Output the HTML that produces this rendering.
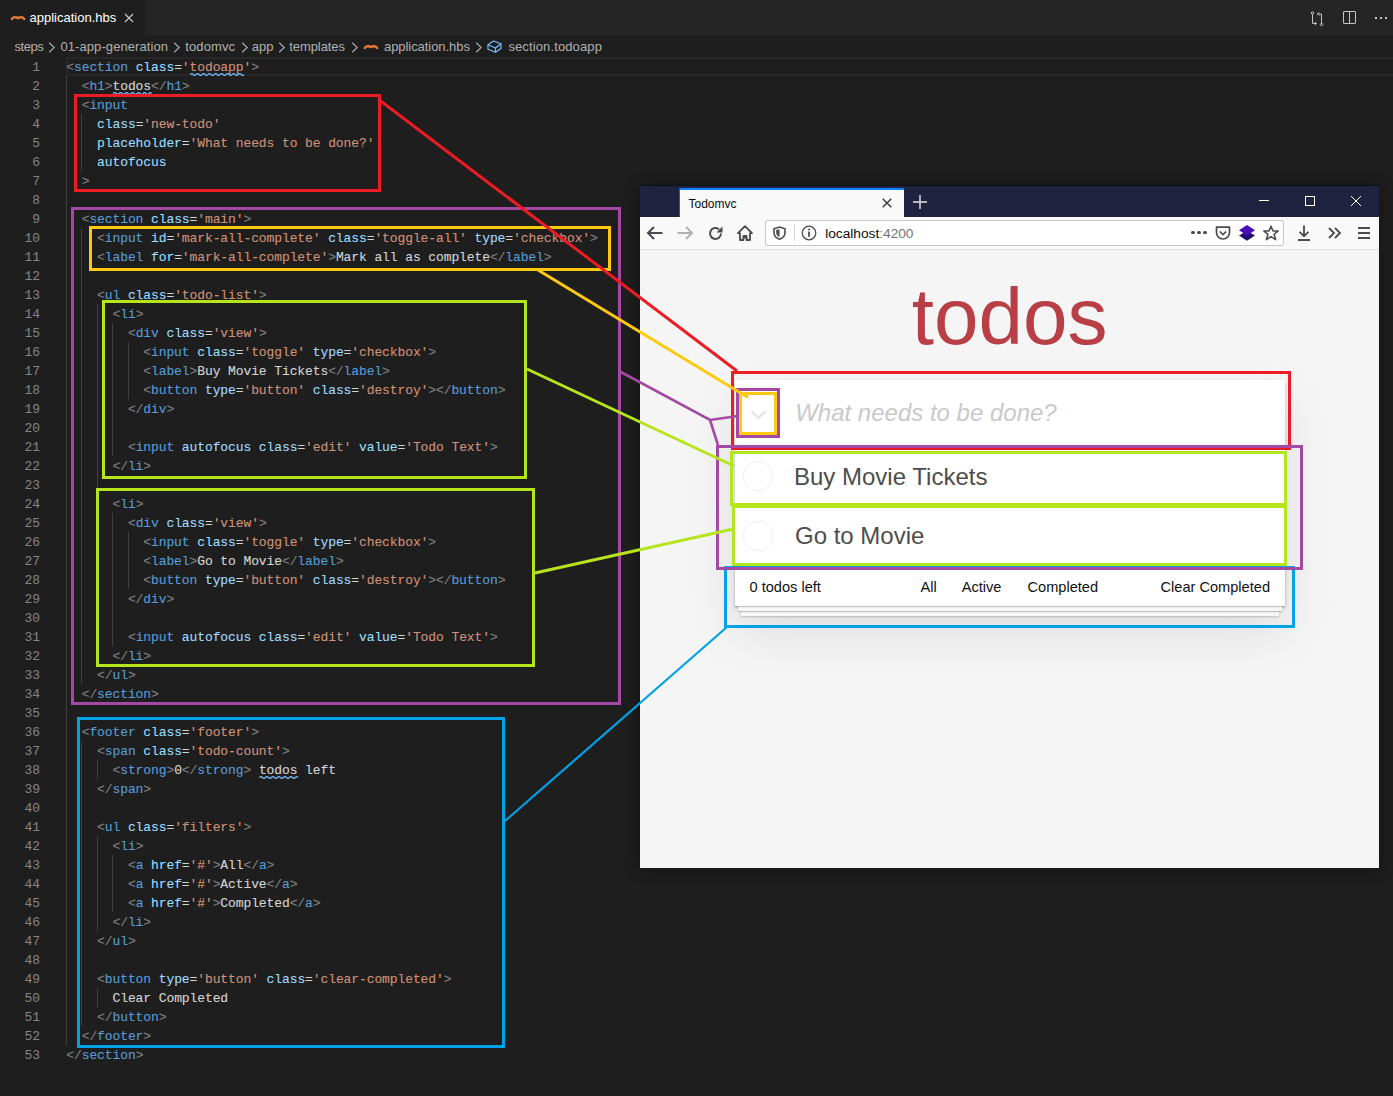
<!DOCTYPE html><html><head><meta charset="utf-8"><style>
html,body{margin:0;padding:0}
body{width:1393px;height:1096px;background:#1e1e1e;position:relative;overflow:hidden;font-family:"Liberation Sans",sans-serif}
.abs{position:absolute}
.t{position:absolute;line-height:0;white-space:pre}
.cl{position:absolute;left:66.3px;height:19px;line-height:19px;white-space:pre;font-family:"Liberation Mono",monospace;font-size:13px;letter-spacing:-0.100px;color:#d4d4d4;-webkit-text-stroke:0.12px currentColor}
.ln{position:absolute;left:0;width:40px;text-align:right;height:19px;line-height:19px;font-family:"Liberation Mono",monospace;font-size:13px;letter-spacing:-0.100px;color:#858585}
.ig{position:absolute;width:1px;background:#404040}
.bx{position:absolute}
</style></head><body>
<div class="abs" style="left:0;top:0;width:1393px;height:35px;background:#252526"></div>
<div class="abs" style="left:0;top:0;width:145px;height:35px;background:#1e1e1e"></div>
<svg class="abs" style="left:10px;top:13px;overflow:visible" width="16" height="10" viewBox="0 0 16 10" ><path d="M1.8 6 Q3.2 4.1 5.1 4.3 Q6.9 4.5 8 5.1 Q9.1 4.5 10.9 4.3 Q12.8 4.1 14.2 6" fill="none" stroke="#e37933" stroke-width="2.4" stroke-linecap="round" stroke-linejoin="round"/></svg>
<div class="t" style="left:29.5px;top:17.90px;font-size:13px;color:#ffffff;font-family:'Liberation Sans',sans-serif;">application.hbs</div>
<svg class="abs" style="left:124px;top:13px;overflow:visible" width="10" height="10" viewBox="0 0 10 10" ><path d="M1 1L9 9M9 1L1 9" stroke="#cccccc" stroke-width="1.1"/></svg>
<svg class="abs" style="left:1309px;top:10px;overflow:visible" width="18" height="18" viewBox="0 0 18 18" ><g fill="none" stroke="#c5c5c5" stroke-width="1"><circle cx="3.5" cy="3" r="1.2"/><path d="M3.5 4.2V13.5H7.5M5.8 11.8L7.5 13.5L5.8 15.2"/><circle cx="12.5" cy="14.5" r="1.2"/><path d="M12.5 13.3V4H8.5M10.2 2.3L8.5 4L10.2 5.7"/></g></svg>
<svg class="abs" style="left:1341px;top:10px;overflow:visible" width="16" height="16" viewBox="0 0 16 16" ><g fill="none" stroke="#c5c5c5" stroke-width="1"><rect x="2.5" y="1.5" width="12" height="12" rx="0.5"/><path d="M8.5 1.5V13.5"/></g></svg>
<div class="abs" style="left:1375px;top:17px;width:2px;height:2px;background:#c5c5c5;box-shadow:5px 0 0 #c5c5c5,10px 0 0 #c5c5c5"></div>
<div class="t" style="left:14.399999999999999px;top:46.80px;font-size:13px;color:#b0b0b0;font-family:'Liberation Sans',sans-serif;letter-spacing:-0.4px">steps</div>
<svg class="abs" style="left:48.2px;top:41.5px;overflow:visible" width="8" height="11" viewBox="0 0 8 11" ><path d="M1.2 0.7L6.2 5.5L1.2 10.3" fill="none" stroke="#a9a9a9" stroke-width="1.2"/></svg>
<div class="t" style="left:60.400000000000006px;top:46.80px;font-size:13px;color:#b0b0b0;font-family:'Liberation Sans',sans-serif;letter-spacing:0.09px">01-app-generation</div>
<svg class="abs" style="left:172.9px;top:41.5px;overflow:visible" width="8" height="11" viewBox="0 0 8 11" ><path d="M1.2 0.7L6.2 5.5L1.2 10.3" fill="none" stroke="#a9a9a9" stroke-width="1.2"/></svg>
<div class="t" style="left:185.2px;top:46.80px;font-size:13px;color:#b0b0b0;font-family:'Liberation Sans',sans-serif;letter-spacing:0.13px">todomvc</div>
<svg class="abs" style="left:240.7px;top:41.5px;overflow:visible" width="8" height="11" viewBox="0 0 8 11" ><path d="M1.2 0.7L6.2 5.5L1.2 10.3" fill="none" stroke="#a9a9a9" stroke-width="1.2"/></svg>
<div class="t" style="left:251.7px;top:46.80px;font-size:13px;color:#b0b0b0;font-family:'Liberation Sans',sans-serif;letter-spacing:0px">app</div>
<svg class="abs" style="left:277.9px;top:41.5px;overflow:visible" width="8" height="11" viewBox="0 0 8 11" ><path d="M1.2 0.7L6.2 5.5L1.2 10.3" fill="none" stroke="#a9a9a9" stroke-width="1.2"/></svg>
<div class="t" style="left:289.2px;top:46.80px;font-size:13px;color:#b0b0b0;font-family:'Liberation Sans',sans-serif;letter-spacing:-0.07px">templates</div>
<svg class="abs" style="left:350.5px;top:41.5px;overflow:visible" width="8" height="11" viewBox="0 0 8 11" ><path d="M1.2 0.7L6.2 5.5L1.2 10.3" fill="none" stroke="#a9a9a9" stroke-width="1.2"/></svg>
<svg class="abs" style="left:363.40000000000003px;top:41.5px;overflow:visible" width="16" height="10" viewBox="0 0 16 10" ><path d="M1.8 6 Q3.2 4.1 5.1 4.3 Q6.9 4.5 8 5.1 Q9.1 4.5 10.9 4.3 Q12.8 4.1 14.2 6" fill="none" stroke="#e37933" stroke-width="2.4" stroke-linecap="round" stroke-linejoin="round"/></svg>
<div class="t" style="left:384.0px;top:46.80px;font-size:13px;color:#b0b0b0;font-family:'Liberation Sans',sans-serif;letter-spacing:-0.06px">application.hbs</div>
<svg class="abs" style="left:474.5px;top:41.5px;overflow:visible" width="8" height="11" viewBox="0 0 8 11" ><path d="M1.2 0.7L6.2 5.5L1.2 10.3" fill="none" stroke="#a9a9a9" stroke-width="1.2"/></svg>
<svg class="abs" style="left:486.6px;top:39.5px;overflow:visible" width="15" height="13" viewBox="0 0 15 13" ><g fill="none" stroke="#75beff" stroke-width="1.2" stroke-linejoin="round"><path d="M1 4.8L6.5 1L14 3.8V8.6L8.5 12.3L1 9.3Z"/><path d="M1 4.8L8.5 8L14 3.8M8.5 8V12.3"/></g></svg>
<div class="t" style="left:508.4px;top:46.80px;font-size:13px;color:#b0b0b0;font-family:'Liberation Sans',sans-serif;letter-spacing:0.12px">section.todoapp</div>
<div class="abs" style="left:66px;top:57px;width:1325px;height:15px;border:2px solid #282828;border-right:none"></div>
<div class="ig" style="left:66px;top:76px;height:969px"></div>
<div class="ig" style="left:81px;top:114px;height:57px"></div>
<div class="ig" style="left:81px;top:228px;height:456px"></div>
<div class="ig" style="left:81px;top:741px;height:285px"></div>
<div class="ig" style="left:97px;top:304px;height:361px"></div>
<div class="ig" style="left:97px;top:760px;height:19px"></div>
<div class="ig" style="left:97px;top:836px;height:95px"></div>
<div class="ig" style="left:97px;top:988px;height:19px"></div>
<div class="ig" style="left:112px;top:323px;height:133px"></div>
<div class="ig" style="left:112px;top:513px;height:133px"></div>
<div class="ig" style="left:112px;top:855px;height:57px"></div>
<div class="ig" style="left:128px;top:342px;height:57px"></div>
<div class="ig" style="left:128px;top:532px;height:57px"></div>
<div class="cl" style="top:58px"><span style="color:#808080">&lt;</span><span style="color:#569cd6">section</span> <span style="color:#9cdcfe">class</span><span style="color:#d4d4d4">=</span><span style="color:#ce9178">&#x27;todoapp&#x27;</span><span style="color:#808080">&gt;</span></div>
<div class="ln" style="top:58px">1</div>
<div class="cl" style="top:77px">  <span style="color:#808080">&lt;</span><span style="color:#569cd6">h1</span><span style="color:#808080">&gt;</span><span style="color:#d4d4d4">todos</span><span style="color:#808080">&lt;/</span><span style="color:#569cd6">h1</span><span style="color:#808080">&gt;</span></div>
<div class="ln" style="top:77px">2</div>
<div class="cl" style="top:96px">  <span style="color:#808080">&lt;</span><span style="color:#569cd6">input</span></div>
<div class="ln" style="top:96px">3</div>
<div class="cl" style="top:115px">    <span style="color:#9cdcfe">class</span><span style="color:#d4d4d4">=</span><span style="color:#ce9178">&#x27;new-todo&#x27;</span></div>
<div class="ln" style="top:115px">4</div>
<div class="cl" style="top:134px">    <span style="color:#9cdcfe">placeholder</span><span style="color:#d4d4d4">=</span><span style="color:#ce9178">&#x27;What needs to be done?&#x27;</span></div>
<div class="ln" style="top:134px">5</div>
<div class="cl" style="top:153px">    <span style="color:#9cdcfe">autofocus</span></div>
<div class="ln" style="top:153px">6</div>
<div class="cl" style="top:172px">  <span style="color:#808080">&gt;</span></div>
<div class="ln" style="top:172px">7</div>
<div class="cl" style="top:191px"></div>
<div class="ln" style="top:191px">8</div>
<div class="cl" style="top:210px">  <span style="color:#808080">&lt;</span><span style="color:#569cd6">section</span> <span style="color:#9cdcfe">class</span><span style="color:#d4d4d4">=</span><span style="color:#ce9178">&#x27;main&#x27;</span><span style="color:#808080">&gt;</span></div>
<div class="ln" style="top:210px">9</div>
<div class="cl" style="top:229px">    <span style="color:#808080">&lt;</span><span style="color:#569cd6">input</span> <span style="color:#9cdcfe">id</span><span style="color:#d4d4d4">=</span><span style="color:#ce9178">&#x27;mark-all-complete&#x27;</span> <span style="color:#9cdcfe">class</span><span style="color:#d4d4d4">=</span><span style="color:#ce9178">&#x27;toggle-all&#x27;</span> <span style="color:#9cdcfe">type</span><span style="color:#d4d4d4">=</span><span style="color:#ce9178">&#x27;checkbox&#x27;</span><span style="color:#808080">&gt;</span></div>
<div class="ln" style="top:229px">10</div>
<div class="cl" style="top:248px">    <span style="color:#808080">&lt;</span><span style="color:#569cd6">label</span> <span style="color:#9cdcfe">for</span><span style="color:#d4d4d4">=</span><span style="color:#ce9178">&#x27;mark-all-complete&#x27;</span><span style="color:#808080">&gt;</span><span style="color:#d4d4d4">Mark all as complete</span><span style="color:#808080">&lt;/</span><span style="color:#569cd6">label</span><span style="color:#808080">&gt;</span></div>
<div class="ln" style="top:248px">11</div>
<div class="cl" style="top:267px"></div>
<div class="ln" style="top:267px">12</div>
<div class="cl" style="top:286px">    <span style="color:#808080">&lt;</span><span style="color:#569cd6">ul</span> <span style="color:#9cdcfe">class</span><span style="color:#d4d4d4">=</span><span style="color:#ce9178">&#x27;todo-list&#x27;</span><span style="color:#808080">&gt;</span></div>
<div class="ln" style="top:286px">13</div>
<div class="cl" style="top:305px">      <span style="color:#808080">&lt;</span><span style="color:#569cd6">li</span><span style="color:#808080">&gt;</span></div>
<div class="ln" style="top:305px">14</div>
<div class="cl" style="top:324px">        <span style="color:#808080">&lt;</span><span style="color:#569cd6">div</span> <span style="color:#9cdcfe">class</span><span style="color:#d4d4d4">=</span><span style="color:#ce9178">&#x27;view&#x27;</span><span style="color:#808080">&gt;</span></div>
<div class="ln" style="top:324px">15</div>
<div class="cl" style="top:343px">          <span style="color:#808080">&lt;</span><span style="color:#569cd6">input</span> <span style="color:#9cdcfe">class</span><span style="color:#d4d4d4">=</span><span style="color:#ce9178">&#x27;toggle&#x27;</span> <span style="color:#9cdcfe">type</span><span style="color:#d4d4d4">=</span><span style="color:#ce9178">&#x27;checkbox&#x27;</span><span style="color:#808080">&gt;</span></div>
<div class="ln" style="top:343px">16</div>
<div class="cl" style="top:362px">          <span style="color:#808080">&lt;</span><span style="color:#569cd6">label</span><span style="color:#808080">&gt;</span><span style="color:#d4d4d4">Buy Movie Tickets</span><span style="color:#808080">&lt;/</span><span style="color:#569cd6">label</span><span style="color:#808080">&gt;</span></div>
<div class="ln" style="top:362px">17</div>
<div class="cl" style="top:381px">          <span style="color:#808080">&lt;</span><span style="color:#569cd6">button</span> <span style="color:#9cdcfe">type</span><span style="color:#d4d4d4">=</span><span style="color:#ce9178">&#x27;button&#x27;</span> <span style="color:#9cdcfe">class</span><span style="color:#d4d4d4">=</span><span style="color:#ce9178">&#x27;destroy&#x27;</span><span style="color:#808080">&gt;</span><span style="color:#808080">&lt;/</span><span style="color:#569cd6">button</span><span style="color:#808080">&gt;</span></div>
<div class="ln" style="top:381px">18</div>
<div class="cl" style="top:400px">        <span style="color:#808080">&lt;/</span><span style="color:#569cd6">div</span><span style="color:#808080">&gt;</span></div>
<div class="ln" style="top:400px">19</div>
<div class="cl" style="top:419px"></div>
<div class="ln" style="top:419px">20</div>
<div class="cl" style="top:438px">        <span style="color:#808080">&lt;</span><span style="color:#569cd6">input</span> <span style="color:#9cdcfe">autofocus</span> <span style="color:#9cdcfe">class</span><span style="color:#d4d4d4">=</span><span style="color:#ce9178">&#x27;edit&#x27;</span> <span style="color:#9cdcfe">value</span><span style="color:#d4d4d4">=</span><span style="color:#ce9178">&#x27;Todo Text&#x27;</span><span style="color:#808080">&gt;</span></div>
<div class="ln" style="top:438px">21</div>
<div class="cl" style="top:457px">      <span style="color:#808080">&lt;/</span><span style="color:#569cd6">li</span><span style="color:#808080">&gt;</span></div>
<div class="ln" style="top:457px">22</div>
<div class="cl" style="top:476px"></div>
<div class="ln" style="top:476px">23</div>
<div class="cl" style="top:495px">      <span style="color:#808080">&lt;</span><span style="color:#569cd6">li</span><span style="color:#808080">&gt;</span></div>
<div class="ln" style="top:495px">24</div>
<div class="cl" style="top:514px">        <span style="color:#808080">&lt;</span><span style="color:#569cd6">div</span> <span style="color:#9cdcfe">class</span><span style="color:#d4d4d4">=</span><span style="color:#ce9178">&#x27;view&#x27;</span><span style="color:#808080">&gt;</span></div>
<div class="ln" style="top:514px">25</div>
<div class="cl" style="top:533px">          <span style="color:#808080">&lt;</span><span style="color:#569cd6">input</span> <span style="color:#9cdcfe">class</span><span style="color:#d4d4d4">=</span><span style="color:#ce9178">&#x27;toggle&#x27;</span> <span style="color:#9cdcfe">type</span><span style="color:#d4d4d4">=</span><span style="color:#ce9178">&#x27;checkbox&#x27;</span><span style="color:#808080">&gt;</span></div>
<div class="ln" style="top:533px">26</div>
<div class="cl" style="top:552px">          <span style="color:#808080">&lt;</span><span style="color:#569cd6">label</span><span style="color:#808080">&gt;</span><span style="color:#d4d4d4">Go to Movie</span><span style="color:#808080">&lt;/</span><span style="color:#569cd6">label</span><span style="color:#808080">&gt;</span></div>
<div class="ln" style="top:552px">27</div>
<div class="cl" style="top:571px">          <span style="color:#808080">&lt;</span><span style="color:#569cd6">button</span> <span style="color:#9cdcfe">type</span><span style="color:#d4d4d4">=</span><span style="color:#ce9178">&#x27;button&#x27;</span> <span style="color:#9cdcfe">class</span><span style="color:#d4d4d4">=</span><span style="color:#ce9178">&#x27;destroy&#x27;</span><span style="color:#808080">&gt;</span><span style="color:#808080">&lt;/</span><span style="color:#569cd6">button</span><span style="color:#808080">&gt;</span></div>
<div class="ln" style="top:571px">28</div>
<div class="cl" style="top:590px">        <span style="color:#808080">&lt;/</span><span style="color:#569cd6">div</span><span style="color:#808080">&gt;</span></div>
<div class="ln" style="top:590px">29</div>
<div class="cl" style="top:609px"></div>
<div class="ln" style="top:609px">30</div>
<div class="cl" style="top:628px">        <span style="color:#808080">&lt;</span><span style="color:#569cd6">input</span> <span style="color:#9cdcfe">autofocus</span> <span style="color:#9cdcfe">class</span><span style="color:#d4d4d4">=</span><span style="color:#ce9178">&#x27;edit&#x27;</span> <span style="color:#9cdcfe">value</span><span style="color:#d4d4d4">=</span><span style="color:#ce9178">&#x27;Todo Text&#x27;</span><span style="color:#808080">&gt;</span></div>
<div class="ln" style="top:628px">31</div>
<div class="cl" style="top:647px">      <span style="color:#808080">&lt;/</span><span style="color:#569cd6">li</span><span style="color:#808080">&gt;</span></div>
<div class="ln" style="top:647px">32</div>
<div class="cl" style="top:666px">    <span style="color:#808080">&lt;/</span><span style="color:#569cd6">ul</span><span style="color:#808080">&gt;</span></div>
<div class="ln" style="top:666px">33</div>
<div class="cl" style="top:685px">  <span style="color:#808080">&lt;/</span><span style="color:#569cd6">section</span><span style="color:#808080">&gt;</span></div>
<div class="ln" style="top:685px">34</div>
<div class="cl" style="top:704px"></div>
<div class="ln" style="top:704px">35</div>
<div class="cl" style="top:723px">  <span style="color:#808080">&lt;</span><span style="color:#569cd6">footer</span> <span style="color:#9cdcfe">class</span><span style="color:#d4d4d4">=</span><span style="color:#ce9178">&#x27;footer&#x27;</span><span style="color:#808080">&gt;</span></div>
<div class="ln" style="top:723px">36</div>
<div class="cl" style="top:742px">    <span style="color:#808080">&lt;</span><span style="color:#569cd6">span</span> <span style="color:#9cdcfe">class</span><span style="color:#d4d4d4">=</span><span style="color:#ce9178">&#x27;todo-count&#x27;</span><span style="color:#808080">&gt;</span></div>
<div class="ln" style="top:742px">37</div>
<div class="cl" style="top:761px">      <span style="color:#808080">&lt;</span><span style="color:#569cd6">strong</span><span style="color:#808080">&gt;</span><span style="color:#d4d4d4">0</span><span style="color:#808080">&lt;/</span><span style="color:#569cd6">strong</span><span style="color:#808080">&gt;</span> <span style="color:#d4d4d4">todos left</span></div>
<div class="ln" style="top:761px">38</div>
<div class="cl" style="top:780px">    <span style="color:#808080">&lt;/</span><span style="color:#569cd6">span</span><span style="color:#808080">&gt;</span></div>
<div class="ln" style="top:780px">39</div>
<div class="cl" style="top:799px"></div>
<div class="ln" style="top:799px">40</div>
<div class="cl" style="top:818px">    <span style="color:#808080">&lt;</span><span style="color:#569cd6">ul</span> <span style="color:#9cdcfe">class</span><span style="color:#d4d4d4">=</span><span style="color:#ce9178">&#x27;filters&#x27;</span><span style="color:#808080">&gt;</span></div>
<div class="ln" style="top:818px">41</div>
<div class="cl" style="top:837px">      <span style="color:#808080">&lt;</span><span style="color:#569cd6">li</span><span style="color:#808080">&gt;</span></div>
<div class="ln" style="top:837px">42</div>
<div class="cl" style="top:856px">        <span style="color:#808080">&lt;</span><span style="color:#569cd6">a</span> <span style="color:#9cdcfe">href</span><span style="color:#d4d4d4">=</span><span style="color:#ce9178">&#x27;#&#x27;</span><span style="color:#808080">&gt;</span><span style="color:#d4d4d4">All</span><span style="color:#808080">&lt;/</span><span style="color:#569cd6">a</span><span style="color:#808080">&gt;</span></div>
<div class="ln" style="top:856px">43</div>
<div class="cl" style="top:875px">        <span style="color:#808080">&lt;</span><span style="color:#569cd6">a</span> <span style="color:#9cdcfe">href</span><span style="color:#d4d4d4">=</span><span style="color:#ce9178">&#x27;#&#x27;</span><span style="color:#808080">&gt;</span><span style="color:#d4d4d4">Active</span><span style="color:#808080">&lt;/</span><span style="color:#569cd6">a</span><span style="color:#808080">&gt;</span></div>
<div class="ln" style="top:875px">44</div>
<div class="cl" style="top:894px">        <span style="color:#808080">&lt;</span><span style="color:#569cd6">a</span> <span style="color:#9cdcfe">href</span><span style="color:#d4d4d4">=</span><span style="color:#ce9178">&#x27;#&#x27;</span><span style="color:#808080">&gt;</span><span style="color:#d4d4d4">Completed</span><span style="color:#808080">&lt;/</span><span style="color:#569cd6">a</span><span style="color:#808080">&gt;</span></div>
<div class="ln" style="top:894px">45</div>
<div class="cl" style="top:913px">      <span style="color:#808080">&lt;/</span><span style="color:#569cd6">li</span><span style="color:#808080">&gt;</span></div>
<div class="ln" style="top:913px">46</div>
<div class="cl" style="top:932px">    <span style="color:#808080">&lt;/</span><span style="color:#569cd6">ul</span><span style="color:#808080">&gt;</span></div>
<div class="ln" style="top:932px">47</div>
<div class="cl" style="top:951px"></div>
<div class="ln" style="top:951px">48</div>
<div class="cl" style="top:970px">    <span style="color:#808080">&lt;</span><span style="color:#569cd6">button</span> <span style="color:#9cdcfe">type</span><span style="color:#d4d4d4">=</span><span style="color:#ce9178">&#x27;button&#x27;</span> <span style="color:#9cdcfe">class</span><span style="color:#d4d4d4">=</span><span style="color:#ce9178">&#x27;clear-completed&#x27;</span><span style="color:#808080">&gt;</span></div>
<div class="ln" style="top:970px">49</div>
<div class="cl" style="top:989px">      <span style="color:#d4d4d4">Clear Completed</span></div>
<div class="ln" style="top:989px">50</div>
<div class="cl" style="top:1008px">    <span style="color:#808080">&lt;/</span><span style="color:#569cd6">button</span><span style="color:#808080">&gt;</span></div>
<div class="ln" style="top:1008px">51</div>
<div class="cl" style="top:1027px">  <span style="color:#808080">&lt;/</span><span style="color:#569cd6">footer</span><span style="color:#808080">&gt;</span></div>
<div class="ln" style="top:1027px">52</div>
<div class="cl" style="top:1046px"><span style="color:#808080">&lt;/</span><span style="color:#569cd6">section</span><span style="color:#808080">&gt;</span></div>
<div class="ln" style="top:1046px">53</div>
<svg class="abs" style="left:0;top:0" width="1393" height="1096"><path d="M190.1 74.5 Q191.6 72.9 193.1 74.5 Q194.6 76.1 196.1 74.5 Q197.6 72.9 199.1 74.5 Q200.6 76.1 202.1 74.5 Q203.6 72.9 205.1 74.5 Q206.6 76.1 208.1 74.5 Q209.6 72.9 211.1 74.5 Q212.6 76.1 214.1 74.5 Q215.6 72.9 217.1 74.5 Q218.6 76.1 220.1 74.5 Q221.6 72.9 223.1 74.5 Q224.6 76.1 226.1 74.5 Q227.6 72.9 229.1 74.5 Q230.6 76.1 232.1 74.5 Q233.6 72.9 235.1 74.5 Q236.6 76.1 238.1 74.5 Q239.6 72.9 241.1 74.5 Q242.6 76.1 244.0 74.5" fill="none" stroke="#75beff" stroke-width="1.2"/><path d="M113.1 93.5 Q114.6 91.9 116.1 93.5 Q117.6 95.1 119.1 93.5 Q120.6 91.9 122.1 93.5 Q123.6 95.1 125.1 93.5 Q126.6 91.9 128.1 93.5 Q129.6 95.1 131.1 93.5 Q132.6 91.9 134.1 93.5 Q135.6 95.1 137.1 93.5 Q138.6 91.9 140.1 93.5 Q141.6 95.1 143.1 93.5 Q144.6 91.9 146.1 93.5 Q147.6 95.1 149.1 93.5 Q150.4 91.9 151.6 93.5" fill="none" stroke="#75beff" stroke-width="1.2"/><path d="M259.4 777.5 Q260.9 775.9 262.4 777.5 Q263.9 779.1 265.4 777.5 Q266.9 775.9 268.4 777.5 Q269.9 779.1 271.4 777.5 Q272.9 775.9 274.4 777.5 Q275.9 779.1 277.4 777.5 Q278.9 775.9 280.4 777.5 Q281.9 779.1 283.4 777.5 Q284.9 775.9 286.4 777.5 Q287.9 779.1 289.4 777.5 Q290.9 775.9 292.4 777.5 Q293.9 779.1 295.4 777.5 Q296.6 775.9 297.9 777.5" fill="none" stroke="#75beff" stroke-width="1.2"/></svg>
<div class="abs" style="left:640px;top:186px;width:739px;height:682px;background:#f5f5f5;box-shadow:0 1px 14px rgba(0,0,0,0.4)"></div>
<div class="abs" style="left:640px;top:186px;width:739px;height:31px;background:#202340"></div>
<div class="abs" style="left:640px;top:185px;width:739px;height:1px;background:#0d0e1c"></div>
<div class="abs" style="left:680px;top:188px;width:224px;height:29px;background:#f9f9fa;border-top:2px solid #0a84ff;box-sizing:border-box"></div>
<div class="abs" style="left:679px;top:188px;width:1px;height:29px;background:#50506e"></div>
<div class="t" style="left:688.5px;top:203.84px;font-size:12px;color:#0c0c0d;font-family:'Liberation Sans',sans-serif;">Todomvc</div>
<svg class="abs" style="left:882px;top:198px;overflow:visible" width="10" height="10" viewBox="0 0 10 10" ><path d="M0.7 0.7L9.3 9.3M9.3 0.7L0.7 9.3" stroke="#38383d" stroke-width="1.4"/></svg>
<svg class="abs" style="left:913px;top:195px;overflow:visible" width="14" height="14" viewBox="0 0 14 14" ><path d="M7 0V14M0 7H14" stroke="#e8e8ea" stroke-width="1.4"/></svg>
<div class="abs" style="left:1259px;top:200px;width:10px;height:1px;background:#fff"></div>
<div class="abs" style="left:1305px;top:196px;width:8px;height:8px;border:1px solid #fff"></div>
<svg class="abs" style="left:1351px;top:196px;overflow:visible" width="10" height="10" viewBox="0 0 10 10" ><path d="M0 0L10 10M10 0L0 10" stroke="#fff" stroke-width="1"/></svg>
<div class="abs" style="left:640px;top:217px;width:739px;height:32px;background:#f9f9fa"></div>
<div class="abs" style="left:640px;top:249px;width:739px;height:1px;background:#e0e0e2"></div>
<svg class="abs" style="left:647px;top:226px;overflow:visible" width="16" height="14" viewBox="0 0 16 14" ><path d="M1 7H15.5M7 1L1 7L7 13" fill="none" stroke="#4a4a4f" stroke-width="2"/></svg>
<svg class="abs" style="left:677px;top:226px;overflow:visible" width="16" height="14" viewBox="0 0 16 14" ><path d="M0.5 7H15M9 1L15 7L9 13" fill="none" stroke="#b1b1b3" stroke-width="2"/></svg>
<svg class="abs" style="left:708px;top:226px;overflow:visible" width="16" height="15" viewBox="0 0 16 15" ><path d="M13 7.5A5.5 5.5 0 1 1 11 3.2" fill="none" stroke="#4a4a4f" stroke-width="2"/><path d="M14.5 0.5V6.5H8.5Z" fill="#4a4a4f"/></svg>
<svg class="abs" style="left:737px;top:225px;overflow:visible" width="16" height="16" viewBox="0 0 16 16" ><path d="M8 1.2L15 8.2H13V15H9.6V10.8H6.4V15H3V8.2H1Z" fill="none" stroke="#4a4a4f" stroke-width="1.8" stroke-linejoin="round"/><rect x="7" y="10.5" width="2" height="3" fill="#4a4a4f"/></svg>
<div class="abs" style="left:765px;top:220px;width:517px;height:24px;background:#fff;border:1px solid #c8c8ca;border-radius:2px"></div>
<svg class="abs" style="left:773px;top:226px;overflow:visible" width="13" height="14" viewBox="0 0 13 14" ><path d="M6.5 1L12 2.8V6.5C12 10 9.5 12.2 6.5 13.2C3.5 12.2 1 10 1 6.5V2.8Z" fill="none" stroke="#4a4a4f" stroke-width="1.6"/><path d="M6.5 3.2V11.2C4.2 10.2 3.2 8.5 3.2 6.5V4Z" fill="#4a4a4f"/></svg>
<div class="abs" style="left:794px;top:224px;width:1px;height:17px;background:#d7d7db"></div>
<svg class="abs" style="left:801px;top:225px;overflow:visible" width="16" height="16" viewBox="0 0 16 16" ><circle cx="8" cy="8" r="6.8" fill="none" stroke="#4a4a4f" stroke-width="1.3"/><rect x="7.1" y="6.6" width="1.8" height="5.2" fill="#4a4a4f"/><circle cx="8" cy="4.6" r="1" fill="#4a4a4f"/></svg>
<div class="t" style="left:825.2px;top:233.75px;font-size:13.7px;color:#0c0c0d;font-family:'Liberation Sans',sans-serif;">localhost</div>
<div class="t" style="left:879.23px;top:233.75px;font-size:13.7px;color:#737373;font-family:'Liberation Sans',sans-serif;">:4200</div>
<div class="abs" style="left:1191.4px;top:231.20000000000002px;width:3.2px;height:3.2px;border-radius:50%;background:#4a4a4f"></div>
<div class="abs" style="left:1197.4px;top:231.20000000000002px;width:3.2px;height:3.2px;border-radius:50%;background:#4a4a4f"></div>
<div class="abs" style="left:1203.4px;top:231.20000000000002px;width:3.2px;height:3.2px;border-radius:50%;background:#4a4a4f"></div>
<svg class="abs" style="left:1215px;top:226px;overflow:visible" width="16" height="14" viewBox="0 0 16 14" ><path d="M1.5 1.2H14.5V6.5A6.5 6.5 0 0 1 1.5 6.5Z" fill="none" stroke="#4a4a4f" stroke-width="1.7" stroke-linejoin="round"/><path d="M4.8 5.5L8 8.6L11.2 5.5" fill="none" stroke="#4a4a4f" stroke-width="1.7"/></svg>
<svg class="abs" style="left:1239px;top:225px;overflow:visible" width="16" height="16" viewBox="0 0 16 16" ><path d="M8 6L16 10.6L8 15.7L0 10.6Z" fill="#1d0f72"/><path d="M8 0L16 5.2L8 10.4L0 5.2Z" fill="#4b0db8"/></svg>
<svg class="abs" style="left:1263px;top:225px;overflow:visible" width="16" height="16" viewBox="0 0 16 16" ><path d="M8 1.2L10 6H15.2L11.1 9.3L12.6 14.6L8 11.6L3.4 14.6L4.9 9.3L0.8 6H6Z" fill="none" stroke="#4a4a4f" stroke-width="1.6" stroke-linejoin="round"/></svg>
<svg class="abs" style="left:1298px;top:225px;overflow:visible" width="12" height="16" viewBox="0 0 12 16" ><path d="M6 0.5V11M1.5 6.8L6 11.2L10.5 6.8" fill="none" stroke="#4a4a4f" stroke-width="1.8"/><rect x="0" y="14" width="12" height="2" fill="#4a4a4f"/></svg>
<svg class="abs" style="left:1328px;top:227px;overflow:visible" width="14" height="12" viewBox="0 0 14 12" ><path d="M1 1L6 6L1 11M7 1L12 6L7 11" fill="none" stroke="#4a4a4f" stroke-width="1.8"/></svg>
<div class="abs" style="left:1358px;top:227.3px;width:12px;height:2px;background:#4a4a4f"></div>
<div class="abs" style="left:1358px;top:232.3px;width:12px;height:2px;background:#4a4a4f"></div>
<div class="abs" style="left:1358px;top:236.9px;width:12px;height:2px;background:#4a4a4f"></div>
<div class="t" style="left:911.8px;top:317.28px;font-size:80px;color:#b83f45;font-family:'Liberation Sans',sans-serif;">todos</div>
<div class="abs" style="left:735px;top:380px;width:550px;height:226px;background:#fff;box-shadow:0 2px 4px 0 rgba(0,0,0,0.2),0 25px 50px 0 rgba(0,0,0,0.1)"></div>
<div class="abs" style="left:735px;top:556px;width:550px;height:50px;overflow:visible;box-shadow:0 1px 1px rgba(0,0,0,0.2),0 8px 0 -3px #f6f6f6,0 9px 1px -3px rgba(0,0,0,0.2),0 16px 0 -6px #f6f6f6,0 17px 2px -6px rgba(0,0,0,0.2)"></div>
<div class="abs" style="left:735px;top:380px;width:550px;height:226px;background:#fff"></div>
<div class="abs" style="left:735px;top:380px;width:550px;height:65px;box-shadow:inset 0 -2px 1px rgba(0,0,0,0.03)"></div>
<svg class="abs" style="left:750px;top:410px;overflow:visible" width="17" height="10" viewBox="0 0 17 10" ><path d="M1.5 1.5L8.5 8L15.5 1.5" fill="none" stroke="#e6e6e6" stroke-width="2.6"/></svg>
<div class="t" style="left:795.2px;top:413.48px;font-size:24px;color:#c9c9c9;font-family:'Liberation Sans',sans-serif;font-style:italic">What needs to be done?</div>
<div class="abs" style="left:735px;top:445px;width:550px;height:1px;background:#e6e6e6"></div>
<div class="abs" style="left:735px;top:505px;width:550px;height:1px;background:#ededed"></div>
<svg class="abs" style="left:742px;top:460px;overflow:visible" width="32" height="32" viewBox="0 0 32 32" ><circle cx="16" cy="16" r="14.8" fill="none" stroke="#ededed" stroke-width="0.9"/></svg>
<div class="t" style="left:794.0px;top:476.98px;font-size:24px;color:#4d4d4d;font-family:'Liberation Sans',sans-serif;">Buy Movie Tickets</div>
<div class="abs" style="left:735px;top:565px;width:550px;height:1px;background:#ededed"></div>
<svg class="abs" style="left:742px;top:520px;overflow:visible" width="32" height="32" viewBox="0 0 32 32" ><circle cx="16" cy="16" r="14.8" fill="none" stroke="#ededed" stroke-width="0.9"/></svg>
<div class="t" style="left:795.0px;top:535.68px;font-size:24px;color:#4d4d4d;font-family:'Liberation Sans',sans-serif;">Go to Movie</div>
<div class="abs" style="left:735px;top:565px;width:550px;height:1px;background:#e6e6e6"></div>
<div class="t" style="left:749.5px;top:586.94px;font-size:14.6px;color:#111111;font-family:'Liberation Sans',sans-serif;">0 todos left</div>
<div class="t" style="left:920.5px;top:586.94px;font-size:14.6px;color:#111111;font-family:'Liberation Sans',sans-serif;">All</div>
<div class="t" style="left:961.7px;top:586.94px;font-size:14.6px;color:#111111;font-family:'Liberation Sans',sans-serif;">Active</div>
<div class="t" style="left:1027.5px;top:586.94px;font-size:14.6px;color:#111111;font-family:'Liberation Sans',sans-serif;">Completed</div>
<div class="t" style="left:1160.5px;top:586.94px;font-size:14.6px;color:#111111;font-family:'Liberation Sans',sans-serif;">Clear Completed</div>
<div class="bx" style="left:74px;top:94px;width:301px;height:92px;border:3px solid #ed1c24"></div>
<div class="bx" style="left:71px;top:207px;width:544px;height:492px;border:3px solid #a349a4"></div>
<div class="bx" style="left:89px;top:226px;width:516px;height:39px;border:3px solid #ffc90e"></div>
<div class="bx" style="left:102px;top:300px;width:419px;height:173px;border:3px solid #b5e61d"></div>
<div class="bx" style="left:96px;top:488px;width:433px;height:173px;border:3px solid #b5e61d"></div>
<div class="bx" style="left:77px;top:717px;width:422px;height:325px;border:3px solid #00a2e8"></div>
<svg class="abs" style="left:0;top:0" width="1393" height="1096" viewBox="0 0 1393 1096"><rect x="732.5" y="372.5" width="557" height="76" fill="none" stroke="#ed1c24" stroke-width="3"/><rect x="731.5" y="452.5" width="554" height="52" fill="none" stroke="#b5e61d" stroke-width="3"/><rect x="733.5" y="506.5" width="552" height="58" fill="none" stroke="#b5e61d" stroke-width="3"/><rect x="725.5" y="567.5" width="568" height="59" fill="none" stroke="#00a2e8" stroke-width="3"/><rect x="717.5" y="446.5" width="584" height="122" fill="none" stroke="#a349a4" stroke-width="3"/><rect x="737.5" y="389.5" width="41" height="47" fill="none" stroke="#a349a4" stroke-width="3"/><rect x="740.5" y="393.5" width="35" height="40" fill="none" stroke="#ffc90e" stroke-width="3"/><polyline points="378,99 737,371" fill="none" stroke="#ed1c24" stroke-width="3" stroke-linejoin="miter"/><polyline points="538,270 748,397.5" fill="none" stroke="#ffc90e" stroke-width="2.9" stroke-linejoin="miter"/><polyline points="619,371 710,420 738,416" fill="none" stroke="#a349a4" stroke-width="2.6" stroke-linejoin="miter"/><polyline points="710,420 718,445" fill="none" stroke="#a349a4" stroke-width="2.6" stroke-linejoin="miter"/><polyline points="527,369 734,466" fill="none" stroke="#b5e61d" stroke-width="2.9" stroke-linejoin="miter"/><polyline points="535,573 733,529" fill="none" stroke="#b5e61d" stroke-width="2.9" stroke-linejoin="miter"/><polyline points="505,821 727,627" fill="none" stroke="#00a2e8" stroke-width="2.2" stroke-linejoin="miter"/></svg>
</body></html>
